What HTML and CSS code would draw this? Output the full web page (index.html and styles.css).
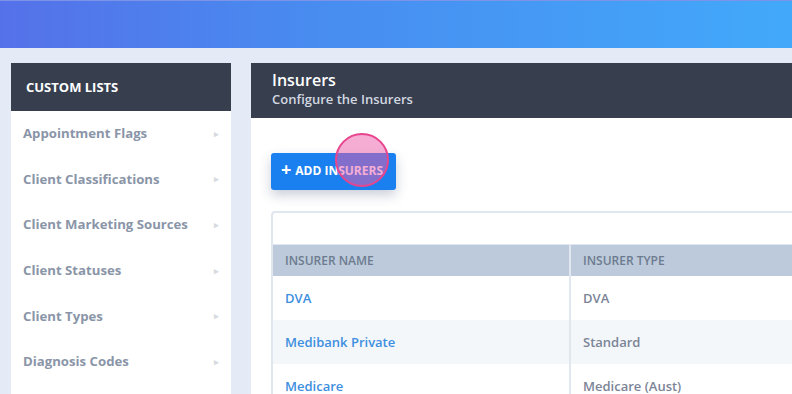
FILE: index.html
```html
<!DOCTYPE html>
<html lang="en">
  <head>
    <meta charset="UTF-8" />
    <title>Insurers</title>
    <link rel="stylesheet" href="styles.css">
  </head>
  <body>
    <header class="topbar"></header>
    <div class="page">
      <aside class="sidebar">
        <div class="sidebar-head">CUSTOM LISTS</div>
        <ul class="list">
          <li>Appointment Flags <span class="caret">&#9656;</span></li>
          <li>Client Classifications <span class="caret">&#9656;</span></li>
          <li>Client Marketing Sources <span class="caret">&#9656;</span></li>
          <li>Client Statuses <span class="caret">&#9656;</span></li>
          <li>Client Types <span class="caret">&#9656;</span></li>
          <li>Diagnosis Codes <span class="caret">&#9656;</span></li>
        </ul>
      </aside>
      <main class="panel">
        <div class="panel-head">
          <h1>Insurers</h1>
          <p>Configure the Insurers</p>
        </div>
        <div class="panel-body">
          <button class="add-btn">
            <span class="plus">+</span> ADD INSURERS
            <span class="touch"></span>
          </button>
          <div class="grid">
            <div class="filter-row"></div>
            <div class="row head">
              <div class="cell">INSURER NAME</div>
              <div class="cell">INSURER TYPE</div>
            </div>
            <div class="row">
              <div class="cell link">DVA</div>
              <div class="cell">DVA</div>
            </div>
            <div class="row alt">
              <div class="cell link">Medibank Private</div>
              <div class="cell">Standard</div>
            </div>
            <div class="row">
              <div class="cell link">Medicare</div>
              <div class="cell">Medicare (Aust)</div>
            </div>
          </div>
        </div>
      </main>
    </div>
  </body>
</html>
```

FILE: styles.css
```css
/* Layout */
html,
body {
  margin: 0;
  padding: 0;
  height: 100%;
  overflow: hidden;
  background: #e4ebf7;
  font-family: "Open Sans", sans-serif;
}
.topbar {
  height: 48px;
  background: linear-gradient(90deg, #5571e9 0%, #488cf0 40%, #42a9fa 100%);
  border-top: 1px solid #7d93e8;
  box-sizing: border-box;
}
.page {
  display: flex;
  gap: 20px;
  padding: 15px 0 0 11px;
}

/* Sidebar */
.sidebar {
  width: 220px;
  flex: none;
  background: #fff;
  height: 400px;
}
.sidebar-head {
  height: 48px;
  display: flex;
  align-items: center;
  padding-left: 15px;
  background: #373f4f;
  color: #fff;
  font-size: 13px;
  font-weight: 700;
}
.list {
  list-style: none;
  margin: 0;
  padding: 0;
}
.list li {
  height: 45.6px;
  display: flex;
  align-items: center;
  justify-content: space-between;
  padding: 0 12px 1px 12px;
  box-sizing: border-box;
  color: #8a95a8;
  font-size: 13.2px;
  font-weight: 700;
}
.caret {
  color: #d6dbe1;
  font-size: 9px;
}

/* Main panel */
.panel {
  flex: 1;
  background: #fff;
  height: 400px;
}
.panel-head {
  height: 55px;
  box-sizing: border-box;
  padding: 6px 21px 0;
  background: #373f4f;
  color: #fff;
}
.panel-head h1 {
  margin: 0;
  font-size: 16px;
  font-weight: 600;
  line-height: 22px;
}
.panel-head p {
  margin: 0;
  font-size: 13px;
  font-weight: 600;
  line-height: 16px;
  color: #d3d8e0;
}
.panel-body {
  padding: 35px 0 0 20px;
}
.add-btn {
  position: relative;
  display: flex;
  align-items: center;
  gap: 4px;
  width: 125px;
  height: 37px;
  padding: 0 0 3px 10px;
  border: none;
  border-radius: 3px;
  background: #1a80f0;
  color: #fff;
  font-family: "Open Sans", sans-serif;
  font-size: 12px;
  font-weight: 700;
  box-shadow: 0 5px 12px rgba(40, 60, 100, 0.25);
}
.plus {
  font-size: 18px;
  line-height: 1;
  margin-top: -2px;
}
.touch {
  position: absolute;
  left: 64px;
  top: -20px;
  width: 50px;
  height: 50px;
  border-radius: 50%;
  border: 2px solid #e8458f;
  background: rgba(236, 92, 168, 0.5);
}

/* Grid */
.grid {
  margin-top: 21px;
  border: 2px solid #e1e7ee;
  border-right: none;
  border-bottom: none;
  border-radius: 4px 0 0 0;
}
.filter-row {
  height: 31px;
  border-bottom: 1px solid #e1e7ee;
}
.row {
  display: flex;
  height: 44px;
  align-items: stretch;
}
.row.alt {
  background: #f4f7fa;
}
.row.head {
  height: 31px;
  background: #bccadb;
}
.cell {
  display: flex;
  align-items: center;
  padding-left: 12px;
  font-size: 13px;
  font-weight: 600;
  color: #7b8597;
}
.cell:first-child {
  width: 284px;
  border-right: 2px solid #e1e7ee;
}
.head .cell {
  font-size: 12px;
  color: #6d7b8f;
}
.cell.link {
  color: #3d8fdf;
}
```
